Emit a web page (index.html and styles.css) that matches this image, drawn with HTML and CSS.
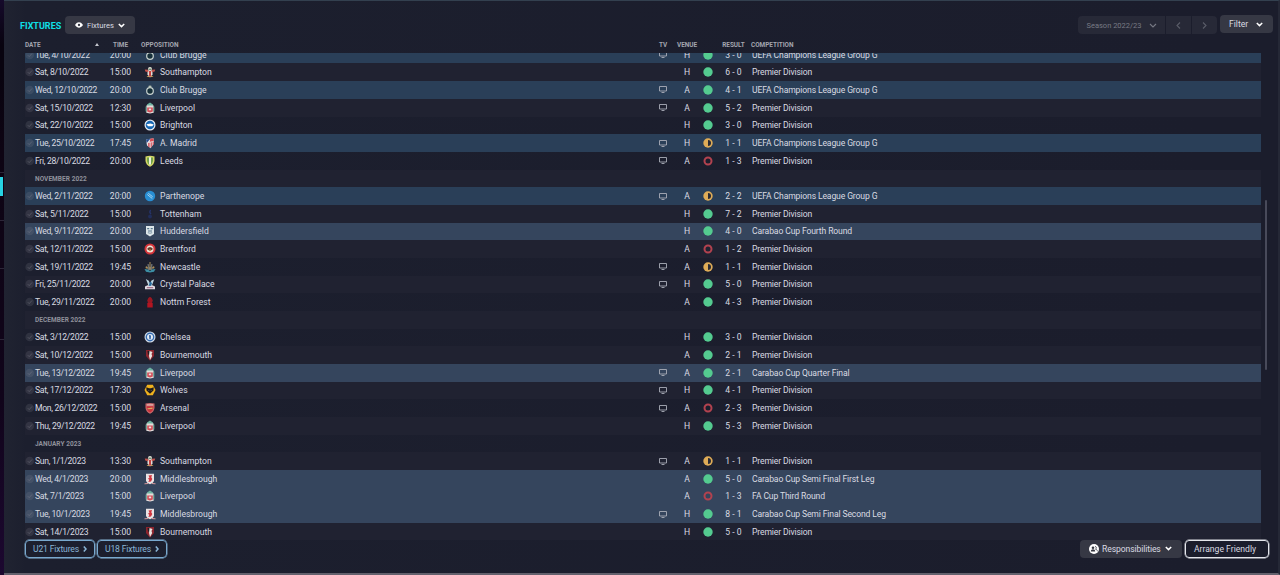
FILE: index.html
```
<!DOCTYPE html>
<html lang="en">
<head>
  <meta charset="utf-8">
  <title>Fixtures</title>
  <link rel="stylesheet" href="styles.css">
</head>
<body>
  <div class="rail">
    <span class="tick tick-1"></span>
    <span class="marker"></span>
    <span class="tick tick-2"></span>
    <span class="tick tick-3"></span>
    <span class="tick tick-4"></span>
  </div>
  <main class="panel">
    <div class="toolbar">
      <h1>FIXTURES</h1>
      <button class="btn view">
        <svg width="8" height="6" viewBox="0 0 9 6"><path fill="#fff" fill-rule="evenodd" d="M0 3C1.5 .8 3 0 4.500 0S7.500.8 9 3C7.500 5.200 6 6 4.500 6S1.500 5.200 0 3zM4.500 1.700a1.300 1.300 0 1 0 0 2.600a1.300 1.300 0 0 0 0-2.600z"/></svg>
        <span>Fixtures</span>
        <svg class="chev" width="7" height="5" viewBox="0 0 7 5"><path d="M.8 1l2.700 2.600L6.200 1"/></svg>
      </button>
      <div class="season">
        <button class="season-name"><span>Season 2022/23</span><svg class="chev" width="8" height="5" viewBox="0 0 8 5"><path d="M1 1l3 3 3-3"/></svg></button>
        <button class="step"><svg class="chev" width="5" height="7" viewBox="0 0 5 7"><path d="M4 .5l-3 3 3 3"/></svg></button>
        <button class="step"><svg class="chev" width="5" height="7" viewBox="0 0 5 7"><path d="M1 .5l3 3-3 3"/></svg></button>
      </div>
      <button class="btn filter"><span>Filter</span><svg class="chev" width="7" height="5" viewBox="0 0 7 5"><path d="M.8 1l2.700 2.600L6.200 1"/></svg></button>
    </div>

    <div class="cols head">
      <span class="h-date">DATE<svg width="4" height="3" viewBox="0 0 4 3"><path fill="#c4c6ce" d="M2 0l2 3H0z"/></svg></span>
      <span class="mid">TIME</span>
      <span class="h-opp">OPPOSITION</span>
      <span class="mid">TV</span>
      <span class="mid">VENUE</span>
      <span></span>
      <span class="mid">RESULT</span>
      <span class="h-comp">COMPETITION</span>
    </div>

    <div class="body">
      <div class="list" id="list"></div>
      <div class="scroll"><div class="thumb"></div></div>
    </div>

    <div class="footer">
      <button class="outline blue"><span>U21 Fixtures</span><svg class="chev" width="4" height="6" viewBox="0 0 4 6"><path d="M.8.6L3 3 .8 5.400"/></svg></button>
      <button class="outline blue"><span>U18 Fixtures</span><svg class="chev" width="4" height="6" viewBox="0 0 4 6"><path d="M.8.6L3 3 .8 5.400"/></svg></button>
      <button class="btn resp">
        <svg width="10" height="10" viewBox="0 0 10 10"><circle cx="5" cy="5" r="5" fill="#fff"/><circle cx="4" cy="3.800" r="1.300" fill="#34363f"/><path d="M1.800 7.500c0-3 4.400-3 4.400 0z" fill="#34363f"/><path d="M6 2.500c1.800 0 1.800 2.200.5 2.600 1.300.2 1.800 1.200 1.900 2.200" fill="none" stroke="#34363f" stroke-width=".8"/></svg>
        <span>Responsibilities</span>
        <svg class="chev" width="7" height="5" viewBox="0 0 7 5"><path d="M.8 1l2.700 2.600L6.200 1"/></svg>
      </button>
      <button class="outline white"><span>Arrange Friendly</span></button>
    </div>
  </main>
  <script src="script.js"></script>
</body>
</html>
```
FILE: styles.css
```
* {
  box-sizing: border-box;
}
body {
  margin: 0;
  width: 1280px;
  height: 575px;
  overflow: hidden;
  display: flex;
  background: #1b1d2c;
  font-family: Roboto, "Liberation Sans", sans-serif;
  font-size: 8.6px;
  color: #d9dbe2;
}
h1, button {
  margin: 0;
  padding: 0;
  border: 0;
  font: inherit;
  color: inherit;
}
button {
  white-space: nowrap;
}
svg {
  display: block;
  flex: none;
}
.chev path {
  fill: none;
  stroke: currentColor;
  stroke-width: 1.5;
}

/* left rail */
.rail {
  width: 4px;
  position: relative;
  background: linear-gradient(#150a2b, #08030f 45px, #08030f 75px, #0d0413 150px, #10041a 400px, #1c0830);
}
.marker {
  position: absolute;
  left: 0;
  top: 177px;
  width: 3px;
  height: 19px;
  background: #27d3e3;
}
.tick {
  position: absolute;
  left: 0;
  width: 4px;
  height: 1px;
  background: #2c2638;
}
.tick-1 { top: 172px; }
.tick-2 { top: 220px; }
.tick-3 { top: 268px; }
.tick-4 { top: 339px; }

.panel {
  width: 1276px;
  height: 575px;
  padding-left: 21px;
  display: flex;
  flex-direction: column;
  background: linear-gradient(90deg, #202331, #1c1f2e 22px, #1b1d2c 1200px);
  border-top: 1px solid #33404f;
  border-right: 2px solid #252836;
  border-bottom: 2px solid #63616d;
}

/* toolbar */
.toolbar {
  height: 36px;
  margin-left: -5px;
  padding-top: 14px;
  display: flex;
  align-items: flex-start;
}
h1 {
  width: 45px;
  margin-top: 5px;
  line-height: 12px;
  font-size: 9px;
  font-weight: 700;
  color: #0fdfe6;
  white-space: nowrap;
}
.btn {
  height: 18px;
  border-radius: 4px;
  background: #363844;
  display: flex;
  align-items: center;
}
.btn .chev {
  color: #fff;
}
.view {
  width: 70px;
  padding: 0 10px;
  margin-top: 1px;
  font-size: 7.6px;
}
.view span {
  margin-left: 4px;
}
.view .chev {
  margin-left: auto;
}
.season {
  margin-left: auto;
  margin-top: 1px;
  display: flex;
  gap: 1px;
  height: 18px;
  color: #777984;
}
.season button {
  display: flex;
  align-items: center;
  justify-content: center;
  background: #272937;
}
.season .season-name {
  width: 87px;
  gap: 7px;
  font-size: 7.5px;
  border-radius: 4px 0 0 4px;
}
.season .chev path {
  stroke-width: 1.1;
}
.season .step {
  width: 25px;
  color: #5a5c68;
}
.step:last-child {
  border-radius: 0 4px 4px 0;
}
.filter {
  width: 53px;
  margin: 0 5px 0 3px;
  padding: 0 10px 0 9px;
  justify-content: space-between;
}

/* table */
.cols {
  display: grid;
  grid-template-columns: 10px 67px 37px 21px 493px 20px 28px 14px 37px 1fr;
  align-items: center;
}
.mid {
  text-align: center;
  justify-self: center;
}
.date {
  letter-spacing: -0.29px;
}
.comp {
  letter-spacing: -0.13px;
}
.head {
  height: 16px;
  width: 1236px;
  padding-bottom: 1px;
  font-size: 6.4px;
  font-weight: 700;
  color: #a3a5af;
}
.h-date {
  grid-column: span 2;
  display: flex;
  align-items: center;
  justify-content: space-between;
  padding: 0 3px 0 0;
}
.h-opp {
  grid-column: span 2;
  padding-left: 2px;
}
.h-comp {
  margin-left: -1px;
}
.body {
  height: 487px;
  display: flex;
}
.list {
  width: 1236px;
  overflow: hidden;
}
.row {
  height: 17.68px;
  white-space: nowrap;
}
.row:first-child {
  margin-top: -7.2px;
}
.row:nth-child(even) {
  background: #202231;
}
.row.euro {
  background: #2a3f58;
}
.row.cup {
  background: #35455d;
}
.month {
  display: flex;
  align-items: center;
  padding: 1px 0 0 10px;
  font-size: 6.5px;
  font-weight: 700;
  letter-spacing: 0.05px;
  color: #8f919b;
}
.badge, .tv, .dot {
  justify-self: center;
}
.scroll {
  padding: 147px 0 0 4px;
}
.thumb {
  width: 2px;
  height: 170px;
  border-radius: 1px;
  background: #484a5a;
}

/* footer */
.footer {
  display: flex;
  align-items: flex-start;
}
.outline {
  height: 18px;
  padding-bottom: 1px;
  background: none;
  border: 1.5px solid;
  border-radius: 4px;
  box-shadow: 0 0 0 0.4px;
  display: flex;
  align-items: center;
  justify-content: center;
  gap: 4px;
}
.blue {
  width: 70px;
  margin-right: 2px;
  border-color: #79a9cf;
  color: #8ab5d6;
  letter-spacing: -0.15px;
}
.white {
  width: 84px;
  margin-right: 9px;
  padding-right: 4px;
  border-color: #e4e6ec;
}
.resp {
  width: 102px;
  margin: 0 3px 0 auto;
  padding: 0 10px 1px 9px;
  letter-spacing: -0.1px;
}
.resp span {
  margin-left: 3px;
}
.resp .chev {
  margin-left: auto;
}
```
FILE: script.js
```
const PD = 'Premier Division';
const CL = 'UEFA Champions League Group G';

// date, time, opponent, tv, venue, outcome, score, competition
const fixtures = [
  ['Tue, 4/10/2022', '20:00', 'Club Brugge', 1, 'H', 'w', '3 - 0', CL],
  ['Sat, 8/10/2022', '15:00', 'Southampton', 0, 'H', 'w', '6 - 0', PD],
  ['Wed, 12/10/2022', '20:00', 'Club Brugge', 1, 'A', 'w', '4 - 1', CL],
  ['Sat, 15/10/2022', '12:30', 'Liverpool', 1, 'A', 'w', '5 - 2', PD],
  ['Sat, 22/10/2022', '15:00', 'Brighton', 0, 'H', 'w', '3 - 0', PD],
  ['Tue, 25/10/2022', '17:45', 'A. Madrid', 1, 'H', 'd', '1 - 1', CL],
  ['Fri, 28/10/2022', '20:00', 'Leeds', 1, 'A', 'l', '1 - 3', PD],
  'NOVEMBER 2022',
  ['Wed, 2/11/2022', '20:00', 'Parthenope', 1, 'A', 'd', '2 - 2', CL],
  ['Sat, 5/11/2022', '15:00', 'Tottenham', 0, 'H', 'w', '7 - 2', PD],
  ['Wed, 9/11/2022', '20:00', 'Huddersfield', 0, 'H', 'w', '4 - 0', 'Carabao Cup Fourth Round'],
  ['Sat, 12/11/2022', '15:00', 'Brentford', 0, 'A', 'l', '1 - 2', PD],
  ['Sat, 19/11/2022', '19:45', 'Newcastle', 1, 'A', 'd', '1 - 1', PD],
  ['Fri, 25/11/2022', '20:00', 'Crystal Palace', 1, 'H', 'w', '5 - 0', PD],
  ['Tue, 29/11/2022', '20:00', 'Nottm Forest', 0, 'A', 'w', '4 - 3', PD],
  'DECEMBER 2022',
  ['Sat, 3/12/2022', '15:00', 'Chelsea', 0, 'H', 'w', '3 - 0', PD],
  ['Sat, 10/12/2022', '15:00', 'Bournemouth', 0, 'A', 'w', '2 - 1', PD],
  ['Tue, 13/12/2022', '19:45', 'Liverpool', 1, 'A', 'w', '2 - 1', 'Carabao Cup Quarter Final'],
  ['Sat, 17/12/2022', '17:30', 'Wolves', 1, 'H', 'w', '4 - 1', PD],
  ['Mon, 26/12/2022', '15:00', 'Arsenal', 1, 'A', 'l', '2 - 3', PD],
  ['Thu, 29/12/2022', '19:45', 'Liverpool', 0, 'H', 'w', '5 - 3', PD],
  'JANUARY 2023',
  ['Sun, 1/1/2023', '13:30', 'Southampton', 1, 'A', 'd', '1 - 1', PD],
  ['Wed, 4/1/2023', '20:00', 'Middlesbrough', 0, 'A', 'w', '5 - 0', 'Carabao Cup Semi Final First Leg'],
  ['Sat, 7/1/2023', '15:00', 'Liverpool', 0, 'A', 'l', '1 - 3', 'FA Cup Third Round'],
  ['Tue, 10/1/2023', '19:45', 'Middlesbrough', 1, 'H', 'w', '8 - 1', 'Carabao Cup Semi Final Second Leg'],
  ['Sat, 14/1/2023', '15:00', 'Bournemouth', 0, 'H', 'w', '5 - 0', PD],
];

// club badges on a 12x12 grid
const badges = {
  'Club Brugge': '<circle cx="6" cy="7" r="3.300" fill="#17303a" stroke="#c9d3cf" stroke-width="1.200"/><path d="M4.300 3.200L5 1.200l1 .8 1-.8.7 2z" fill="#b9c4b4"/>',
  'Southampton': '<path d="M3.500 4.500h5v4L6 11.500 3.500 8.500z" fill="#e8dedb"/><path d="M5 5h2v5.500H5z" fill="#c3413e"/><path d="M.8 3.500l3.500.3v2.500l-3-.8zM11.200 3.500l-3.500.3v2.500l3-.8z" fill="#c0534d"/><circle cx="6" cy="3" r="2" fill="#e9e4d8"/><path d="M4.600 2.700h2.800v1H4.600z" fill="#3e6b52"/><path d="M2.500 10.500l2-1 1 1.800zM9.500 10.500l-2-1-1 1.800z" fill="#d6a65d"/>',
  'Liverpool': '<path d="M3 2.500l3-2 3 2V4H3z" fill="#6fb5a3"/><path d="M2.300 3.500h7.400v7.200L6 11.600l-3.700-.9z" fill="#e3dcda"/><path d="M3.200 5.500h5.600v4L6 10.600 3.200 9.500z" fill="#d04a55"/><path d="M4.800 6.500h2.400v1.800H4.800z" fill="#f1dfdd"/><path d="M1.600 4.500h1v5h-1zM9.400 4.500h1v5h-1z" fill="#58a08e"/>',
  'Brighton': '<circle cx="6" cy="6" r="5.500" fill="#e8eef5"/><circle cx="6" cy="6" r="4.300" fill="#1768b5"/><path d="M2.500 5.300l4-.8 3.300 1-1.500 1.800H4z" fill="#fff"/>',
  'A. Madrid': '<path d="M2 2.500l7.500-1.300.5 5.500-3.500 4.600L3 8.500z" fill="#e7e2e4"/><path d="M4.300 6l1.200-.3v5L4.300 9.500zM6.700 5.500l1-.2v4.200l-1 1.200zM8.700 5l1-.3v2.500l-1 1.300z" fill="#cf3340"/><path d="M2 2.500l4.300-.8L2.700 6z" fill="#24498c"/><path d="M6.300 1.700l3.200-.5.3 2.800-4 .8z" fill="#d94a52"/>',
  'Leeds': '<path d="M1.500 1.500Q6 0 10.500 1.500V6Q10 10 6 11.700 2 10 1.500 6z" fill="#d3d765"/><path d="M3 2.500h6V6Q8.500 9 6 10 3.500 9 3 6z" fill="#73a24b"/><path d="M5 2.300h2v7L6 10 5 9.300z" fill="#edf0e0"/>',
  'Parthenope': '<circle cx="6" cy="6" r="5.200" fill="#288ed3"/><path d="M3.300 4.500l5 4M4.300 3.300l4.400 3.500" fill="none" stroke="#b5dbf3" stroke-width=".9"/>',
  'Tottenham': '<circle cx="6" cy="8.500" r="1.900" fill="#202d5a"/><path d="M6.200 6.500L5 4l1-2.500 1.200.8L6.500 4l1 2z" fill="#26346a"/>',
  'Huddersfield': '<path d="M2 1h8v8L6 11.500 2 9z" fill="#dce5e8"/><path d="M3.200 3h2v1.200h-2zM6.700 3h2v1.200h-2zM4 5.500h4v1H4zM3.500 7.500h2V9zM8.500 7.500h-2V9z" fill="#55758b"/>',
  'Brentford': '<circle cx="6" cy="6" r="5.500" fill="#d5343a"/><circle cx="6" cy="6" r="3.500" fill="#f0e3d6"/><path d="M3.500 5L6 4l2.500 1v1.500L6 8 3.500 6.500z" fill="#653b2e"/><path d="M5 6.500h2L6 8.500z" fill="#d8a33c"/>',
  'Newcastle': '<path d="M3.500 3h1.200l.6 3h1.400l.5-3h1.300L8 9H4z" fill="#6c6f71"/><path d="M.5 8l3.500.5 2 1.500 2-1.500 3.500-.5-1.500 2.800-4 .7-4-.7z" fill="#3d8fa4"/><path d="M5.500 1h1v7.500h-1zM2 5l2 1.500L3.500 8 1.500 7zM10 5L8 6.500 8.500 8l2-1z" fill="#a98f59"/>',
  'Crystal Palace': '<path d="M1.800 1l3 1.700L6 5.500l1.500-3 2.700-1.300L8.500 6 7.500 8h-3L3.500 5z" fill="#bcd4df"/><path d="M6 3.500l2 1.500-1 3H4.700z" fill="#276b9d"/><path d="M1 8.500l2.500-1.300L6 8l2.500-.8L11 8.500v2.700H1z" fill="#e1dce2"/><path d="M2.800 9.200h6.400v1H2.800z" fill="#925877"/>',
  'Nottm Forest': '<path d="M4.300 2L6 .8 7.700 2l1 2.500-.8 3H4.100l-.8-3z" fill="#9b1722"/><path d="M3.300 7h5.400v4.500H3.300z" fill="#b31521"/>',
  'Chelsea': '<circle cx="6" cy="6" r="5.500" fill="#d4dde8"/><circle cx="6" cy="6" r="4.400" fill="#336ab0"/><circle cx="6" cy="6" r="3" fill="#e5edf5"/><path d="M5 4l2 .5-.3 3.700H5.400z" fill="#2c60a5"/>',
  'Bournemouth': '<path d="M2 1h8v6L6 11.700 2 7z" fill="#8c252e"/><path d="M3.500 2h3L5.500 7 4 5z" fill="#241b20"/><path d="M5.500 2l3 1-1 2 .7 2L6 11 5 7z" fill="#e9e3df"/>',
  'Wolves': '<path d="M3.200.8h5.600L11.500 6l-2.700 5.200H3.200L.5 6z" fill="#efb11d"/><path d="M2.300 3.300L5 4.300h2l2.700-1-.2 3.200L6 9.700 2.500 6.500z" fill="#1d1b1c"/><path d="M4.500 6l1 .6H4.600zM7.500 6l-1 .6h.9z" fill="#fff"/>',
  'Arsenal': '<path d="M1.500 1.500Q6 .3 10.500 1.500V6Q10 10 6 11.700 2 10 1.500 6z" fill="#c9696b"/><path d="M2.600 4.300h6.800V6Q9 9 6 10.500 3 9 2.600 6z" fill="#c8323b"/><path d="M3 2.300h6v1.200H3z" fill="#e2b9b4"/><path d="M3.500 6.200l5-.7v1.400l-5 .4z" fill="#d9aa5e"/>',
  'Middlesbrough': '<path d="M2 .7h8v7.300Q9 10.500 6 11.200 3 10.500 2 8z" fill="#e9e3e4"/><path d="M4.500 2.500L8 2l-.7 2.300L8.300 6 7 8.500 4.300 9l1-2-1.300-1.500 1.500-.8z" fill="#cf3540"/><path d="M.5 10.800l3.500-.3M11.500 10.800l-3.500-.3" stroke="#d99a9d"/>',
};

const dots = {
  w: '<circle cx="5" cy="5" r="4.700" fill="#54cb90"/>',
  d: '<circle cx="5" cy="5" r="4.700" fill="#dfac57"/><path d="M5 2a3 3 0 0 1 0 6z" fill="#2a2b35"/>',
  l: '<circle cx="5" cy="5" r="3.500" fill="none" stroke="#b2424f" stroke-width="2"/>',
};

const check = '<svg width="10" height="10" viewBox="0 0 10 10"><circle cx="4.700" cy="5" r="4.300" fill="#8b8d98" fill-opacity=".18"/><path d="M2.800 5.200l1.400 1.400L7 3.500" fill="none" stroke="#8b8d98" stroke-opacity=".35"/></svg>';
const tv = '<svg width="8" height="7" viewBox="0 0 8 7"><path d="M.5.5h7v4.500h-7zM2.500 6.500h3" fill="none" stroke="#a9adb8" stroke-width=".9"/></svg>';

const drawRow = (f) => {
  if (typeof f === 'string') {
    return `<div class="row month">${f}</div>`;
  }
  const [date, time, team, onTv, venue, outcome, score, comp] = f;
  const kind = comp === PD ? '' : comp === CL ? ' euro' : ' cup';
  return `<div class="row cols${kind}">
    ${check}
    <span class="date">${date}</span>
    <span class="mid">${time}</span>
    <svg class="badge" width="12" height="12" viewBox="0 0 12 12">${badges[team]}</svg>
    <span class="team">${team}</span>
    <span class="tv">${onTv ? tv : ''}</span>
    <span class="mid">${venue}</span>
    <svg class="dot" width="10" height="10" viewBox="0 0 10 10">${dots[outcome]}</svg>
    <span class="mid">${score}</span>
    <span class="comp">${comp}</span>
  </div>`;
};

document.querySelector('#list').innerHTML = fixtures.map(drawRow).join('');
```
